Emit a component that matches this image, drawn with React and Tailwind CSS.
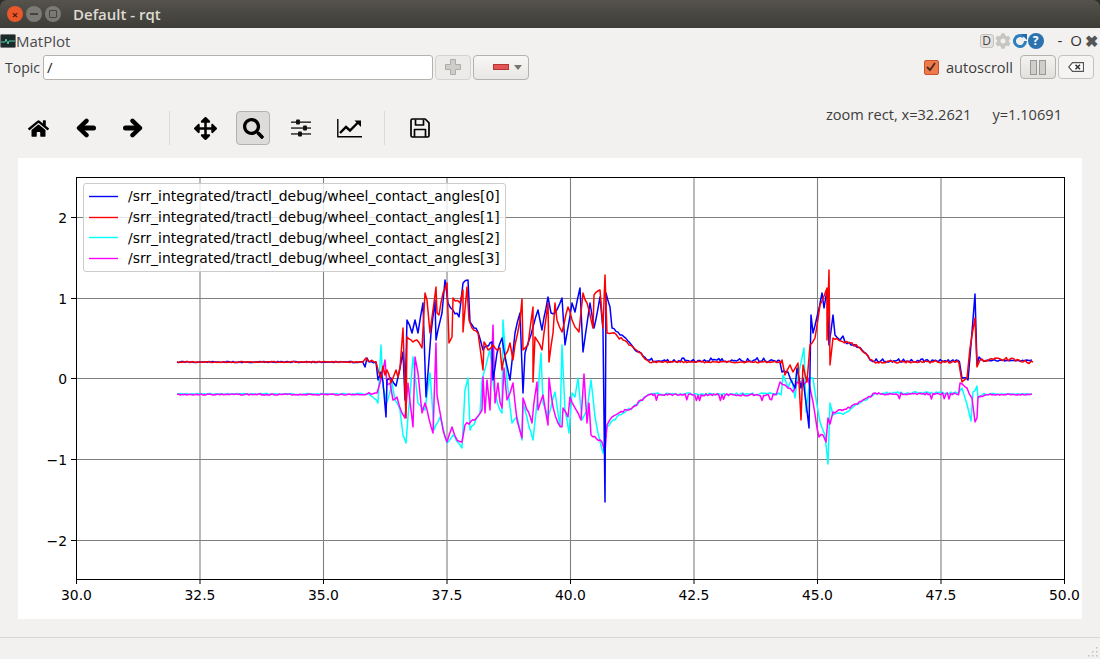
import { FaHome, FaArrowsAlt, FaSearch, FaCog } from "react-icons/fa";

// small deterministic noise for the calm stretches of the plot
function flat(x0, x1, y, amp, seed, bias = 0) {
  const pts = [];
  let s = seed;
  for (let x = x0; x < x1; x += 1.6) {
    s = (s * 9301 + 49297) % 233280;
    const r = s / 233280;
    let d = (r - 0.5) * amp;
    if (bias && r > 0.88) d += bias * (r - 0.6) * 8;
    pts.push([x, y + d]);
  }
  return pts;
}

// the long hand-read segments get midpoints with a little jitter, like sampled data
function rough(pts, seed) {
  const out = [];
  let s = seed;
  pts.forEach((p, i) => {
    const q = pts[i + 1];
    out.push(p);
    if (q && q[0] - p[0] > 2.5) {
      const n = Math.floor((q[0] - p[0]) / 1.8);
      for (let k = 1; k < n; k++) {
        s = (s * 9301 + 49297) % 233280;
        const t = k / n;
        out.push([p[0] + (q[0] - p[0]) * t, p[1] + (q[1] - p[1]) * t + (s / 233280 - 0.5) * 3.2]);
      }
    }
  });
  return out;
}

const toPath = (pts) => pts.map((p) => `${p[0].toFixed(1)},${p[1].toFixed(1)}`).join(" ");

const blue = [
  ...flat(177, 364, 362, 1.4, 11),
  [365, 367], [367, 358], [369, 362], [376, 362], [378, 380], [381, 372], [383, 382], [386, 417], [387, 380], [391, 378], [396, 386], [400, 368], [403, 352], [405, 400], [407, 320], [412, 333], [415, 320], [418, 333], [423, 303], [426, 397], [431, 333], [435, 300], [436, 340], [442, 313], [445, 280], [448, 303], [453, 310], [459, 317], [463, 283], [468, 280], [470, 322], [478, 332], [483, 350], [492, 342], [493, 380], [497, 353], [502, 338], [505, 357], [510, 380], [515, 333], [520, 313], [523, 393], [525, 353], [533, 327], [538, 310], [542, 330], [548, 297], [551, 313], [555, 313], [562, 298], [565, 345], [572, 303], [575, 312], [580, 288], [583, 352], [590, 303], [594, 328], [600, 297], [603, 330], [605, 502], [606, 293], [610, 307], [612, 328], [622, 335], [633, 347], [647, 360],
  ...flat(650, 780, 361, 3, 23, -1.5),
  [782, 372], [788, 372], [795, 388], [797, 368], [801, 388], [803, 378], [809, 428], [811, 315], [813, 333], [817, 317], [822, 293], [824, 308], [827, 290], [829, 345], [833, 315], [835, 335], [840, 340], [843, 336], [845, 342], [853, 345], [862, 350], [870, 360],
  ...flat(873, 960, 361, 3, 37, -1.2),
  [962, 378], [968, 380], [972, 332], [975, 294], [977, 365], [979, 357], [982, 360],
  ...flat(984, 1033, 360.5, 1.4, 41),
];

const red = [
  ...flat(177, 364, 362, 1, 5),
  [366, 358], [368, 361], [376, 362], [378, 370], [381, 378], [383, 366], [385, 375], [387, 370], [389, 375], [391, 383], [393, 378], [396, 370], [398, 377], [400, 368], [403, 328], [406, 418], [407, 337], [413, 342], [417, 340], [422, 348], [425, 293], [427, 300], [430, 333], [436, 287], [437, 313], [439, 315], [443, 293], [447, 283], [449, 343], [452, 337], [453, 298], [460, 303], [463, 290], [463, 332], [467, 287], [469, 320], [472, 328], [478, 333], [483, 370], [484, 342], [488, 350], [493, 345], [497, 350], [500, 348], [502, 370], [503, 363], [510, 343], [513, 360], [515, 345], [520, 320], [522, 299], [523, 350], [528, 345], [533, 307], [533, 382], [535, 337], [542, 350], [548, 303], [549, 362], [553, 333], [555, 303], [557, 320], [562, 332], [568, 307], [572, 320], [575, 327], [579, 332], [583, 293], [587, 303], [593, 328], [594, 295], [600, 290], [603, 328], [605, 275], [607, 333], [612, 333], [623, 340], [633, 347], [647, 360],
  ...flat(650, 782, 362, 1.6, 17),
  [782, 360], [785, 375], [790, 365], [793, 372], [798, 363], [801, 420], [803, 365], [807, 382], [810, 345], [815, 338], [820, 305], [827, 288], [827, 340], [829, 270], [830, 365], [833, 338], [850, 343], [860, 348], [872, 360],
  ...flat(874, 960, 362, 2.2, 29),
  [962, 382], [967, 378], [970, 348], [975, 318], [977, 367], [980, 360], [1010, 359], [1023, 362], [1033, 362],
];

const cyan = [
  ...flat(177, 366, 394, 1.2, 7),
  [367, 394], [378, 403], [381, 345], [383, 387], [387, 402], [392, 383], [395, 400], [400, 410], [403, 435], [406, 443], [408, 417], [413, 357], [418, 403], [425, 410], [430, 373], [434, 430], [440, 417], [447, 443], [453, 435], [462, 448], [465, 390], [468, 378], [470, 430], [480, 413], [482, 380], [490, 350], [494, 390], [498, 405], [502, 413], [503, 320], [507, 380], [512, 423], [517, 417], [522, 440], [523, 403], [533, 440], [537, 403], [541, 353], [543, 403], [548, 417], [555, 392], [560, 427], [562, 345], [565, 410], [569, 433], [572, 393], [575, 397], [578, 378], [582, 420], [587, 410], [591, 380], [595, 417], [598, 433], [603, 453], [607, 427], [613, 420], [623, 413], [633, 407], [648, 395],
  ...flat(650, 782, 394, 2.2, 31),
  [783, 375], [788, 388], [792, 380], [795, 398], [797, 382], [804, 348], [806, 412], [810, 378], [813, 378], [817, 405], [820, 422], [825, 435], [828, 464], [830, 403], [833, 415], [847, 412], [860, 403], [875, 393],
  ...flat(877, 960, 393, 2.5, 43),
  [962, 388], [965, 398], [971, 421], [973, 392], [977, 386], [978, 398], [982, 395],
  ...flat(984, 1033, 394, 1.4, 47),
];

const magenta = [
  ...flat(177, 366, 394.5, 1.2, 3),
  [367, 394], [377, 393], [380, 383], [385, 360], [387, 385], [390, 383], [393, 400], [397, 397], [402, 413], [405, 418], [408, 383], [413, 427], [415, 357], [418, 373], [422, 413], [425, 403], [433, 433], [436, 343], [437, 395], [443, 430], [447, 442], [452, 427], [457, 440], [462, 442], [465, 425], [475, 420], [482, 410], [483, 377], [485, 413], [487, 380], [490, 410], [493, 325], [495, 403], [498, 383], [500, 402], [502, 408], [504, 368], [507, 400], [510, 393], [513, 383], [517, 420], [522, 438], [523, 398], [532, 423], [534, 402], [537, 382], [538, 410], [543, 395], [548, 425], [549, 378], [553, 407], [558, 423], [562, 427], [563, 408], [568, 417], [570, 397], [578, 413], [581, 420], [584, 374], [587, 423], [589, 403], [591, 435], [602, 442], [605, 452], [607, 425], [612, 417], [623, 412], [633, 407], [648, 395],
  ...flat(650, 778, 395, 2.4, 53, 1.4),
  [780, 382], [785, 385], [788, 388], [793, 392], [797, 382], [803, 385], [808, 378], [810, 388], [813, 402], [817, 428], [819, 437], [823, 435], [826, 442], [828, 418], [830, 424], [833, 412], [850, 408], [863, 400], [875, 393],
  ...flat(877, 959, 394, 2.6, 59, 1.6),
  [960, 383], [967, 388], [972, 398], [975, 422], [977, 418], [978, 397], [985, 395],
  ...flat(987, 1033, 394.5, 1.4, 61),
];

const xTicks = [
  [76.5, "30.0"], [200, "32.5"], [323.5, "35.0"], [447, "37.5"], [570.5, "40.0"], [694, "42.5"], [817.5, "45.0"], [941, "47.5"], [1064.5, "50.0"],
];
const yTicks = [
  [217.5, "2"], [298.5, "1"], [378.5, "0"], [459.5, "\u22121"], [540.5, "\u22122"],
];

const legend = [
  ["#0000ff", "/srr_integrated/tractl_debug/wheel_contact_angles[0]"],
  ["#ff0000", "/srr_integrated/tractl_debug/wheel_contact_angles[1]"],
  ["#00ffff", "/srr_integrated/tractl_debug/wheel_contact_angles[2]"],
  ["#ff00ff", "/srr_integrated/tractl_debug/wheel_contact_angles[3]"],
];

function Plot() {
  return (
    <div className="relative mx-[18px] h-[461px] bg-white">
      <svg viewBox="18 158 1064 461" className="block h-[461px] w-[1064px]" style={{ fontFamily: "'DejaVu Sans', sans-serif" }}>
        {xTicks.slice(1, -1).map(([x]) => (
          <line key={x} x1={x} x2={x} y1="177" y2="579" stroke="#808080" strokeWidth="1.1" />
        ))}
        {yTicks.map(([y]) => (
          <line key={y} x1="76" x2="1064" y1={y} y2={y} stroke="#808080" strokeWidth="1.1" />
        ))}
        <polyline points={toPath(rough(cyan, 71))} fill="none" stroke="#00ffff" strokeWidth="1.5" strokeLinejoin="round" />
        <polyline points={toPath(rough(magenta, 73))} fill="none" stroke="#ff00ff" strokeWidth="1.5" strokeLinejoin="round" />
        <polyline points={toPath(rough(blue, 79))} fill="none" stroke="#0000ff" strokeWidth="1.5" strokeLinejoin="round" />
        <polyline points={toPath(rough(red, 83))} fill="none" stroke="#ff0000" strokeWidth="1.5" strokeLinejoin="round" />
        <rect x="76.5" y="177.5" width="988" height="402" fill="none" stroke="#000" strokeWidth="1" />
        {xTicks.map(([x, t]) => (
          <g key={t}>
            <line x1={x} x2={x} y1="579" y2="584" stroke="#000" />
            <text x={x} y="599.5" textAnchor="middle" fontSize="13.9" fill="#000">{t}</text>
          </g>
        ))}
        {yTicks.map(([y, t]) => (
          <g key={t}>
            <line x1="71" x2="76" y1={y} y2={y} stroke="#000" />
            <text x="67" y={y + 5} textAnchor="end" fontSize="13.9" fill="#000">{t}</text>
          </g>
        ))}
      </svg>
      <div className="absolute left-[65px] top-[25px] flex h-[89px] w-[423px] flex-col justify-center rounded-[3px] border border-[#cccccc] bg-white/80 pl-[5px] font-['DejaVu_Sans',sans-serif] text-[13.9px] leading-[20.8px] text-black">
        {legend.map(([color, label]) => (
          <div key={label} className="flex items-center whitespace-nowrap">
            <svg viewBox="0 0 29 3" className="mr-[10px] h-[3px] w-[29px]">
              <line x1="0" x2="29" y1="1.5" y2="1.5" stroke={color} strokeWidth="1.4" />
            </svg>
            <span>{label}</span>
          </div>
        ))}
      </div>
    </div>
  );
}

function ArrowIcon({ flip }) {
  return (
    <svg viewBox="0 0 20 20" className={`h-[20px] w-[20px] ${flip ? "-scale-x-100" : ""}`} fill="none" stroke="#000" strokeLinecap="round" strokeLinejoin="round">
      <path d="M10.5 2.8L3 10l7.5 7.2" strokeWidth="4.4" />
      <path d="M4 10h13.5" strokeWidth="5" />
    </svg>
  );
}

function SlidersIcon() {
  return (
    <svg viewBox="0 0 20 18" className="h-[18px] w-[20px]" fill="#111">
      <rect x="0" y="2.5" width="20" height="1.3" />
      <rect x="0" y="8.4" width="20" height="1.3" />
      <rect x="0" y="14.3" width="20" height="1.3" />
      <rect x="5" y="0.5" width="4" height="5" rx="1" />
      <rect x="12" y="6.5" width="4" height="5" rx="1" />
      <rect x="7" y="12.5" width="4" height="5" rx="1" />
    </svg>
  );
}

function LineChartIcon() {
  return (
    <svg viewBox="0 0 25 20" className="h-[20px] w-[25px]" fill="none" stroke="#000">
      <path d="M0.8 1v17.7H25" strokeWidth="1.4" />
      <path d="M3 15l6-6 4 3.5 8-8" strokeWidth="2.4" />
      <path d="M17.5 2.5H24v6.5z" fill="#000" stroke="none" />
    </svg>
  );
}

function SaveIcon() {
  return (
    <svg viewBox="0 0 20 20" className="h-[20px] w-[20px]" fill="none" stroke="#000" strokeWidth="1.7" strokeLinejoin="round">
      <path d="M2.5 1h12.7L19 4.8v12.7a1.5 1.5 0 0 1-1.5 1.5h-15A1.5 1.5 0 0 1 1 17.5v-15A1.5 1.5 0 0 1 2.5 1z" />
      <path d="M5.5 1.5v5.5h8v-5.5" />
      <path d="M4.5 19v-7.5h11v7.5" />
    </svg>
  );
}

function ToolButton({ children, active }) {
  return (
    <div
      className={`flex h-[34px] w-[34px] items-center justify-center rounded-[4px] ${
        active ? "border border-[#b5b2ae] bg-[#dedcda]" : ""
      }`}
    >
      {children}
    </div>
  );
}

function Toolbar() {
  return (
    <div className="flex h-[77px] items-start justify-between pl-[21px] pr-[38px]">
      <div className="mt-[30px] flex items-center text-black">
        <ToolButton><FaHome size={21} /></ToolButton>
        <div className="ml-[14px]"><ToolButton><ArrowIcon /></ToolButton></div>
        <div className="ml-[13px]"><ToolButton><ArrowIcon flip /></ToolButton></div>
        <div className="ml-[19px] mr-[18px] h-[34px] w-px bg-[#dcdad7]" />
        <ToolButton><FaArrowsAlt size={23} /></ToolButton>
        <div className="ml-[14px]"><ToolButton active><FaSearch size={21} /></ToolButton></div>
        <div className="ml-[14px]"><ToolButton><SlidersIcon /></ToolButton></div>
        <div className="ml-[14px]"><ToolButton><LineChartIcon /></ToolButton></div>
        <div className="mx-[18px] h-[34px] w-px bg-[#dcdad7]" />
        <ToolButton><SaveIcon /></ToolButton>
      </div>
      <div className="mt-[23px] flex gap-[21px] text-[14.6px] leading-[20px] text-[#3c3c3c]">
        <span>zoom rect, x=32.2621</span>
        <span>y=1.10691</span>
      </div>
    </div>
  );
}

export default function App() {
  return (
    <div className="flex h-[659px] w-[1100px] flex-col overflow-hidden bg-[#2f2e2a] font-['Open_Sans',sans-serif]">
      {/* window title bar */}
      <div className="flex h-[28px] shrink-0 items-center rounded-t-[7px] bg-gradient-to-b from-[#55534c] to-[#3d3c37] pl-[7px]">
        <div className="flex h-[16px] w-[16px] items-center justify-center rounded-full bg-[#e9572b] text-[11px] font-bold leading-none text-[#4a1a0a]">×</div>
        <div className="ml-[3px] flex h-[16px] w-[16px] items-center justify-center rounded-full bg-[#7b7a74]">
          <span className="h-[2px] w-[8px] bg-[#45443f]" />
        </div>
        <div className="ml-[3px] flex h-[16px] w-[16px] items-center justify-center rounded-full bg-[#7b7a74]">
          <span className="h-[8px] w-[8px] rounded-[1px] border border-[#45443f]" />
        </div>
        <span className="ml-[12px] text-[15px] font-semibold text-[#dfdbd2]">Default - rqt</span>
      </div>

      <div className="flex min-h-0 flex-1 flex-col bg-[#f2f1f0]">
        {/* plugin title row */}
        <div className="flex h-[25px] shrink-0 items-center justify-between pr-[2px]">
          <div className="flex items-center">
            <svg viewBox="0 0 16 14" className="h-[14px] w-[16px]">
              <rect x="0.5" y="0.5" width="15" height="13" rx="1" fill="#1c2a2a" stroke="#777" />
              <path d="M1 8h4l1-3 2 5 1-3h6" fill="none" stroke="#4fd0a8" strokeWidth="1" />
            </svg>
            <span className="mt-[2px] text-[15px] leading-none text-[#4a4a4a]">MatPlot</span>
          </div>
          <div className="flex items-center">
            <span className="flex h-[14px] w-[14px] items-center justify-center rounded-[3px] border border-[#c4c2be] bg-[#e6e3df] text-[12px] leading-none text-[#444]">D</span>
            <FaCog size={16} className="ml-[1px] text-[#c8c6c2]" />
            <svg viewBox="0 0 16 16" className="ml-[1px] h-[16px] w-[16px]">
              <path d="M13.5 8a5.5 5.5 0 1 1-2-4.2" fill="none" stroke="#2d7fc0" strokeWidth="3" />
              <path d="M9 1h6v6z" fill="#1f6cab" />
            </svg>
            <span className="flex h-[16px] w-[16px] items-center justify-center rounded-full bg-[#2d72b0] text-[12px] font-bold leading-none text-white">?</span>
            <span className="ml-[14px] text-[15px] leading-none text-[#333]">-</span>
            <span className="ml-[8px] text-[15px] leading-none text-[#333]">O</span>
            <span className="ml-[3px] text-[16px] font-bold leading-none text-[#555]">✖</span>
          </div>
        </div>

        {/* topic row */}
        <div className="flex h-[28px] shrink-0 items-center justify-between pl-[5px] pr-[6px]">
          <div className="flex items-center">
            <span className="mt-[1px] text-[14px] leading-none text-[#3c3c3c]">Topic</span>
            <div className="ml-[3px] flex h-[25px] w-[390px] items-center rounded-[3px] border border-[#b5b2ae] bg-white pl-[3px] text-[15px] text-[#222]">/</div>
            <div className="ml-[2px] flex h-[25px] w-[36px] items-center justify-center rounded-[4px] border border-[#d4d2ce] bg-[#ecebe9]">
              <svg viewBox="0 0 16 16" className="h-[16px] w-[16px]">
                <path d="M5.5 0.5h5v5h5v5h-5v5h-5v-5h-5v-5h5z" fill="#cfcdca" stroke="#aeaca8" />
              </svg>
            </div>
            <div className="ml-[2px] flex h-[25px] w-[56px] items-center justify-end rounded-[4px] border border-[#b5b2ae] bg-gradient-to-b from-[#f8f7f6] to-[#e9e7e5] pr-[6px]">
              <span className="h-[6px] w-[16px] border border-[#b83434] bg-[#e25555]" />
              <span className="ml-[5px] h-0 w-0 border-x-[4px] border-t-[5px] border-x-transparent border-t-[#77756f]" />
            </div>
          </div>
          <div className="flex items-center">
            <span className="flex h-[15px] w-[15px] items-center justify-center rounded-[2px] border border-[#c9542a] bg-[#ec7a4d]">
              <svg viewBox="0 0 12 12" className="h-[12px] w-[12px]">
                <path d="M2 6l3 3 5-7" fill="none" stroke="#4a2a1a" strokeWidth="1.8" />
              </svg>
            </span>
            <span className="ml-[7px] text-[14.6px] leading-none text-[#3c3c3c]">autoscroll</span>
            <div className="ml-[7px] flex h-[24px] w-[36px] items-center justify-center gap-[2px] rounded-[4px] border border-[#b5b2ae] bg-gradient-to-b from-[#f4f3f2] to-[#e2e0de]">
              <span className="h-[15px] w-[7px] border border-[#9a9894] bg-[#d0cecb]" />
              <span className="h-[15px] w-[7px] border border-[#9a9894] bg-[#d0cecb]" />
            </div>
            <div className="ml-[2px] flex h-[24px] w-[36px] items-center justify-center rounded-[4px] border border-[#c4c2be] bg-[#f5f4f3]">
              <svg viewBox="0 0 16 10" className="h-[10px] w-[16px]">
                <path d="M4.5 0.7h11v8.6h-11L0.7 5z" fill="#fff" stroke="#555" strokeWidth="1.2" />
                <path d="M7.5 2.8l4.5 4.4M12 2.8L7.5 7.2" stroke="#333" strokeWidth="1.6" />
              </svg>
            </div>
          </div>
        </div>

        <Toolbar />
        <Plot />

        {/* status bar with its size grip */}
        <div className="mt-[18px] flex flex-1 items-end justify-end border-t border-[#d9d7d4] pb-[2px] pr-[2px]">
          <svg viewBox="0 0 10 10" className="h-[10px] w-[10px]" fill="#c4c2be">
            <rect x="8" y="0" width="1.5" height="1.5" />
            <rect x="4" y="4" width="1.5" height="1.5" />
            <rect x="8" y="4" width="1.5" height="1.5" />
            <rect x="0" y="8" width="1.5" height="1.5" />
            <rect x="4" y="8" width="1.5" height="1.5" />
            <rect x="8" y="8" width="1.5" height="1.5" />
          </svg>
        </div>
      </div>
    </div>
  );
}
